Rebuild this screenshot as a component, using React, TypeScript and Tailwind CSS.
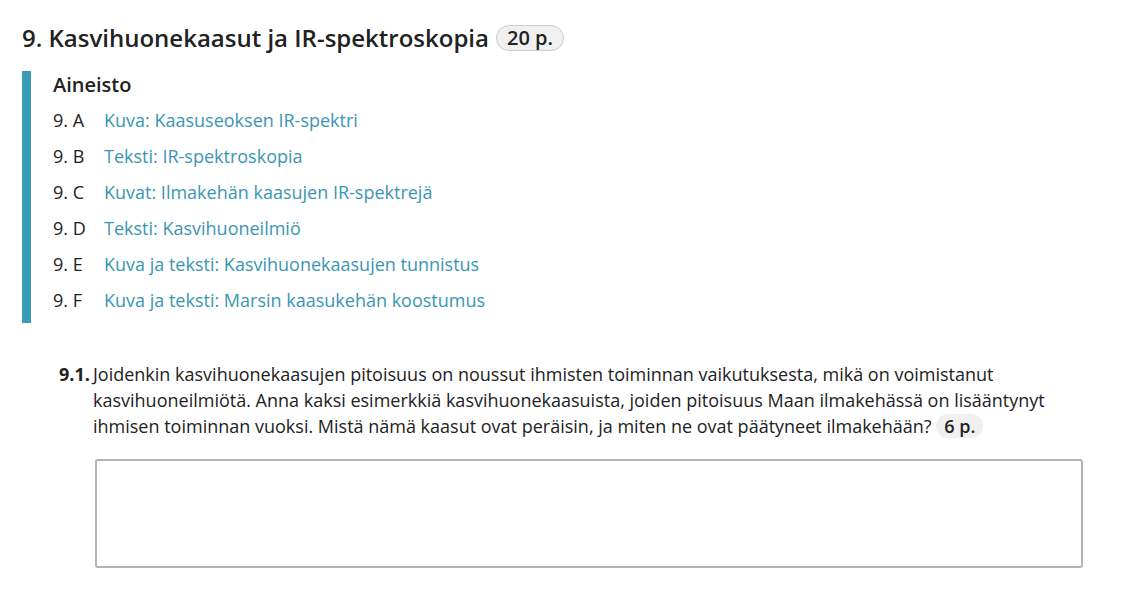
const materials = [
  { id: '9. A', title: 'Kuva: Kaasuseoksen IR-spektri' },
  { id: '9. B', title: 'Teksti: IR-spektroskopia' },
  { id: '9. C', title: 'Kuvat: Ilmakehän kaasujen IR-spektrejä' },
  { id: '9. D', title: 'Teksti: Kasvihuoneilmiö' },
  { id: '9. E', title: 'Kuva ja teksti: Kasvihuonekaasujen tunnistus' },
  { id: '9. F', title: 'Kuva ja teksti: Marsin kaasukehän koostumus' }
]

export default function App() {
  return (
    <div
      className="min-h-[612px] w-[1124px] bg-white text-[#222] pl-[22px] pt-[20px]"
      style={{ fontFamily: '"Open Sans", "Noto Sans", sans-serif' }}
    >
      <h2 className="flex items-center text-[24px] font-semibold leading-[36px]">
        9. Kasvihuonekaasut ja IR-spektroskopia
        <span className="ml-[7px] rounded-full border border-[#ccc] bg-[#f0f0f0] px-[10px] text-[20px] font-semibold leading-[24px]">
          20 p.
        </span>
      </h2>

      <div className="mt-[15px] border-l-[9px] border-[#3a9bb9] pl-[22px] pb-[5px]">
        <h3 className="text-[20px] font-semibold leading-[28px]">Aineisto</h3>
        <ul className="mt-[3px]">
          {materials.map((m) => (
            <li key={m.id} className="flex h-[36px] items-center text-[18px]">
              <span className="w-[51px]">{m.id}</span>
              <a href="#" className="text-[#3a96b4]">
                {m.title}
              </a>
            </li>
          ))}
        </ul>
      </div>

      <div className="mt-[38px] flex pl-[37px] pr-[55px] text-[18px] leading-[26px]">
        <span className="w-[34px] shrink-0 font-bold">9.1.</span>
        <p>
          Joidenkin kasvihuonekaasujen pitoisuus on noussut ihmisten toiminnan vaikutuksesta, mikä on voimistanut
          kasvihuoneilmiötä. Anna kaksi esimerkkiä kasvihuonekaasuista, joiden pitoisuus Maan ilmakehässä on lisääntynyt
          ihmisen toiminnan vuoksi. Mistä nämä kaasut ovat peräisin, ja miten ne ovat päätyneet ilmakehään?{' '}
          <span className="inline-block rounded-full bg-[#f0f0f0] px-[8px] font-semibold leading-[24px]">6 p.</span>
        </p>
      </div>

      <div className="ml-[73px] mt-[20px] h-[109px] w-[988px] rounded-[3px] border-2 border-[#b3b3b3] bg-white" />
    </div>
  )
}
